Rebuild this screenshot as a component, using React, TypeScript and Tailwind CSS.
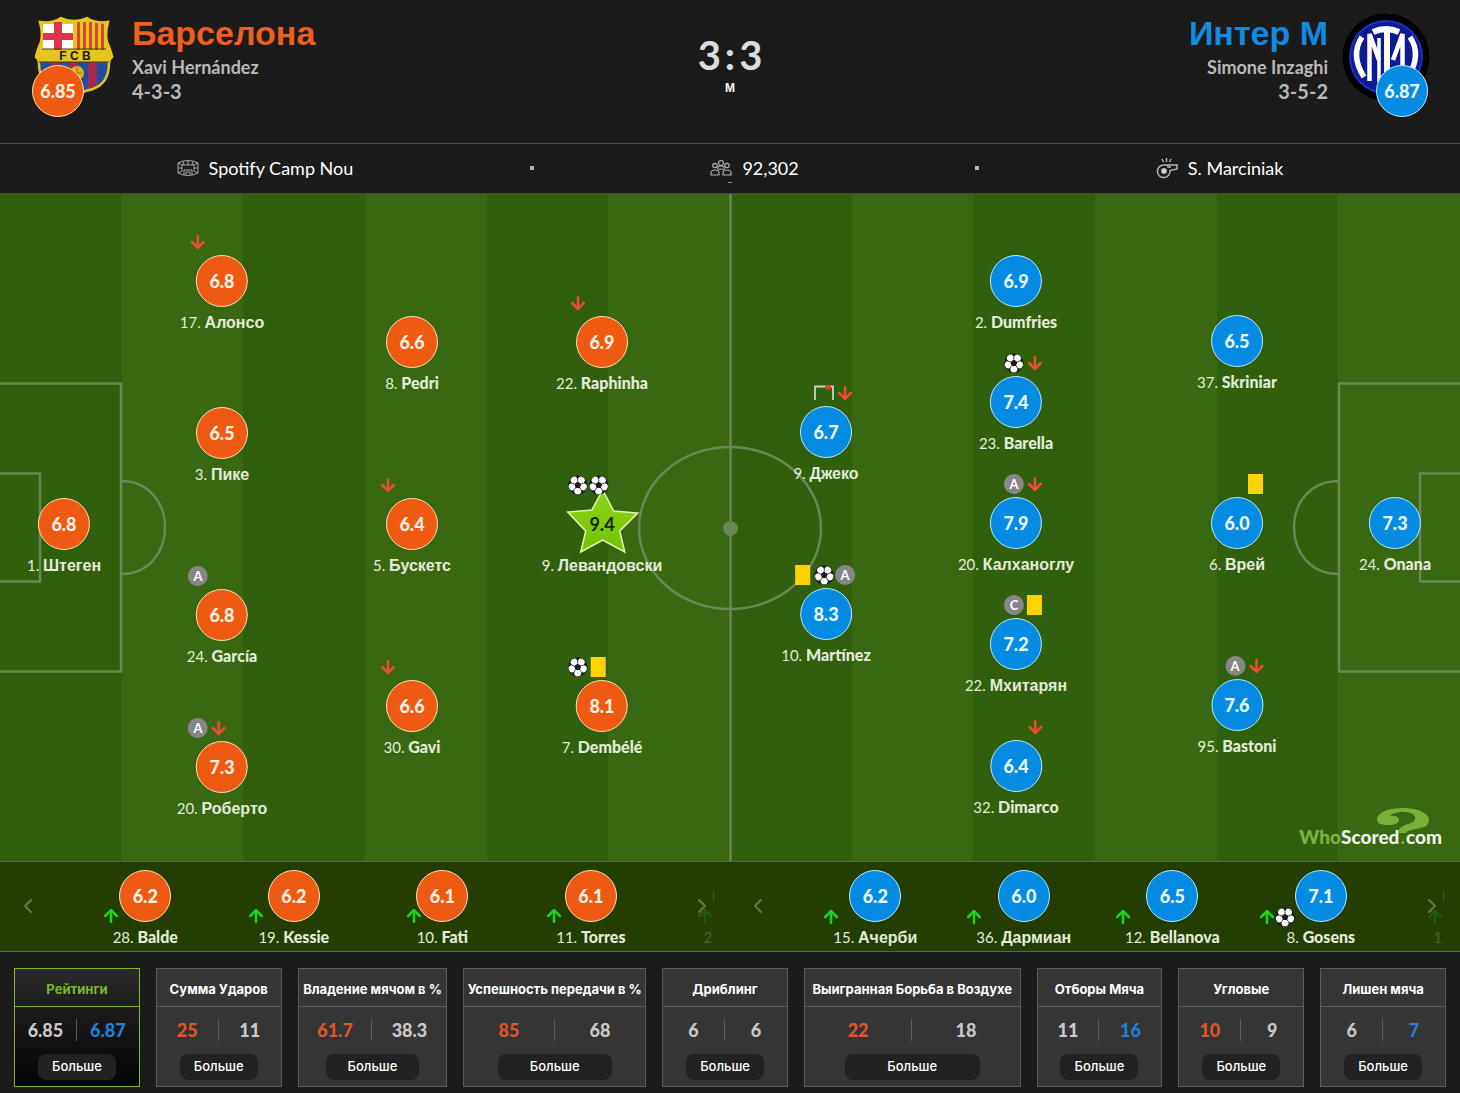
import { clsx } from "clsx";
import { ArrowDown, ArrowUp, ChevronLeft, ChevronRight } from "lucide-react";

type Team = "home" | "away";
type Event = "goal" | "assist" | "captain" | "yellow" | "off" | "on" | "woodwork";

interface PlayerData {
  number: number;
  name: string;
  rating: string;
  events?: Event[];
  star?: boolean;
}

interface PitchPlayer extends PlayerData {
  x: number;
  y: number;
}

// Pitch coordinates are in units of the 1460 x 667 pitch drawing
const PITCH_W = 1460;
const PITCH_H = 667;

const homePlayers: PitchPlayer[] = [
  { x: 64, y: 330, number: 1, name: "Штеген", rating: "6.8" },
  { x: 222, y: 87, number: 17, name: "Алонсо", rating: "6.8", events: ["off"] },
  { x: 222, y: 239, number: 3, name: "Пике", rating: "6.5" },
  { x: 222, y: 421, number: 24, name: "García", rating: "6.8", events: ["assist"] },
  { x: 222, y: 573, number: 20, name: "Роберто", rating: "7.3", events: ["assist", "off"] },
  { x: 412, y: 148, number: 8, name: "Pedri", rating: "6.6" },
  { x: 412, y: 330, number: 5, name: "Бускетс", rating: "6.4", events: ["off"] },
  { x: 412, y: 512, number: 30, name: "Gavi", rating: "6.6", events: ["off"] },
  { x: 602, y: 148, number: 22, name: "Raphinha", rating: "6.9", events: ["off"] },
  { x: 602, y: 330, number: 9, name: "Левандовски", rating: "9.4", events: ["goal", "goal"], star: true },
  { x: 602, y: 512, number: 7, name: "Dembélé", rating: "8.1", events: ["goal", "yellow"] },
];

const awayPlayers: PitchPlayer[] = [
  { x: 826, y: 238, number: 9, name: "Джеко", rating: "6.7", events: ["woodwork", "off"] },
  { x: 826, y: 420, number: 10, name: "Martínez", rating: "8.3", events: ["yellow", "goal", "assist"] },
  { x: 1016, y: 87, number: 2, name: "Dumfries", rating: "6.9" },
  { x: 1016, y: 208, number: 23, name: "Barella", rating: "7.4", events: ["goal", "off"] },
  { x: 1016, y: 329, number: 20, name: "Калханоглу", rating: "7.9", events: ["assist", "off"] },
  { x: 1016, y: 450, number: 22, name: "Мхитарян", rating: "7.2", events: ["captain", "yellow"] },
  { x: 1016, y: 572, number: 32, name: "Dimarco", rating: "6.4", events: ["off"] },
  { x: 1237, y: 147, number: 37, name: "Skriniar", rating: "6.5" },
  { x: 1237, y: 329, number: 6, name: "Врей", rating: "6.0", events: ["yellow"] },
  { x: 1237, y: 511, number: 95, name: "Bastoni", rating: "7.6", events: ["assist", "off"] },
  { x: 1395, y: 329, number: 24, name: "Onana", rating: "7.3" },
];

const homeSubs: PlayerData[] = [
  { number: 28, name: "Balde", rating: "6.2", events: ["on"] },
  { number: 19, name: "Kessie", rating: "6.2", events: ["on"] },
  { number: 10, name: "Fati", rating: "6.1", events: ["on"] },
  { number: 11, name: "Torres", rating: "6.1", events: ["on"] },
];

const awaySubs: PlayerData[] = [
  { number: 15, name: "Ачерби", rating: "6.2", events: ["on"] },
  { number: 36, name: "Дармиан", rating: "6.0", events: ["on"] },
  { number: 12, name: "Bellanova", rating: "6.5", events: ["on"] },
  { number: 8, name: "Gosens", rating: "7.1", events: ["on", "goal"] },
];

const stats = [
  { label: "Рейтинги", home: "6.85", away: "6.87", best: "away", active: true },
  { label: "Сумма Ударов", home: "25", away: "11", best: "home" },
  { label: "Владение мячом в %", home: "61.7", away: "38.3", best: "home" },
  { label: "Успешность передачи в %", home: "85", away: "68", best: "home" },
  { label: "Дриблинг", home: "6", away: "6" },
  { label: "Выигранная Борьба в Воздухе", home: "22", away: "18", best: "home" },
  { label: "Отборы Мяча", home: "11", away: "16", best: "away" },
  { label: "Угловые", home: "10", away: "9", best: "home" },
  { label: "Лишен мяча", home: "6", away: "7", best: "away" },
];

const isCyrillic = (text: string) => /[а-яё]/i.test(text);

function BallIcon() {
  return (
    <svg viewBox="0 0 20 20" className="h-5 w-5">
      <circle cx="10" cy="10" r="9.7" fill="#1c1c1c" />
      <g fill="#fff">
        {[0, 72, 144, 216, 288].map((angle) => (
          <ellipse key={angle} cx="10" cy="16.200" rx="3.500" ry="3.100" transform={`rotate(${angle} 10 10)`} />
        ))}
        <circle cx="10" cy="10" r="4.600" />
      </g>
      <path d="M10 6.400l3.500 2.500-1.300 4.100H7.800L6.500 8.900z" fill="#1c1c1c" />
      <path
        d="M10 6.400V4.500M13.500 8.900l1.800-.6M12.200 13l1.100 1.500M7.800 13l-1.100 1.500M6.500 8.900l-1.800-.6"
        stroke="#1c1c1c"
        strokeWidth="0.8"
      />
    </svg>
  );
}

function EventIcon({ type }: { type: Event }) {
  if (type === "goal") return <BallIcon />;
  if (type === "yellow") return <span className="ml-0.5 mr-[3px] h-5 w-[15px] bg-[#ffd200]" />;
  if (type === "off") return <ArrowDown className="h-5 w-5 text-[#ef4a33]" strokeWidth={3} />;
  if (type === "on") return <ArrowUp className="h-5 w-5 text-[#1ed41e]" strokeWidth={3} />;
  if (type === "woodwork") {
    return (
      <svg viewBox="0 0 20 20" className="h-5 w-5" fill="none">
        <path d="M1 17V3.500h18V17" stroke="#c9d6bd" strokeWidth="1.8" />
        <path d="M11 4h6M12.500 6.500l4-4.500M12.500 2l3.500 4.500" stroke="#ef3b35" strokeWidth="1.8" />
      </svg>
    );
  }
  return (
    <span className="flex h-5 w-5 items-center justify-center rounded-full bg-[#868686] font-['Lato',sans-serif] text-[13px] font-bold leading-5 text-white">
      {type === "assist" ? "A" : "C"}
    </span>
  );
}

function RatingCircle({ team, rating }: { team: Team; rating: string }) {
  return (
    <span
      className={clsx(
        "flex h-[52px] w-[52px] shrink-0 items-center justify-center rounded-full border text-lg font-black leading-6",
        team === "home"
          ? "border-[#ffdfb0] bg-[#ee5a12] text-[#fff0e4]"
          : "border-[#b5eaff] bg-[#068be2] text-[#e8f8ff]"
      )}
    >
      {rating}
    </span>
  );
}

function RatingStar({ rating }: { rating: string }) {
  return (
    <span className="relative flex h-[52px] w-[52px] items-center justify-center text-lg font-bold leading-6 text-[#14260a]">
      <svg viewBox="0 0 76 68" className="absolute -left-3 -top-3 h-[68px] w-[76px]">
        <defs>
          <linearGradient id="star" x1="0" y1="0" x2="0" y2="1">
            <stop offset="0" stopColor="#8ed41c" />
            <stop offset="1" stopColor="#72c404" />
          </linearGradient>
        </defs>
        <path
          d="M39 4l11 21 24 2-18 18 5 21-22-12-22 12 5-21L4 26l24-2z"
          fill="url(#star)"
          stroke="#e6f7b4"
          strokeWidth="1.500"
        />
      </svg>
      <span className="relative">{rating}</span>
    </span>
  );
}

function PlayerName({ number, name }: { number: number; name: string }) {
  return (
    <span className="mt-[5px] whitespace-nowrap text-[15px] leading-5 text-[#e4ecd9]">
      {number}.{" "}
      <b
        className={clsx(
          "text-base leading-5",
          isCyrillic(name) ? "font-['Liberation_Sans',sans-serif] font-bold" : "font-black"
        )}
      >
        {name}
      </b>
    </span>
  );
}

function Player({ player, team }: { player: PitchPlayer; team: Team }) {
  return (
    <li
      className="absolute flex -translate-x-1/2 -translate-y-[49px] flex-col items-center"
      style={{
        left: `${(player.x / PITCH_W) * 100}%`,
        top: `${(player.y / PITCH_H) * 100}%`,
      }}
    >
      <span
        className={clsx(
          "relative z-10 mb-[3px] flex h-5 w-16 items-center gap-px",
          team === "away" ? "mr-1.5 justify-end" : "mr-1"
        )}
      >
        {player.events?.map((type, i) => <EventIcon key={i} type={type} />)}
      </span>
      {player.star ? (
        <RatingStar rating={player.rating} />
      ) : (
        <RatingCircle team={team} rating={player.rating} />
      )}
      <PlayerName number={player.number} name={player.name} />
    </li>
  );
}

function PitchLines() {
  return (
    <svg
      viewBox="0 0 1460 667"
      preserveAspectRatio="none"
      className="absolute inset-0 h-full w-full"
      fill="none"
      stroke="#6a8757"
      strokeWidth="2.500"
    >
      <path d="M730.500 0v667" />
      <ellipse cx="730" cy="334" rx="91" ry="81" />
      <circle cx="730.500" cy="334.500" r="7.500" fill="#6a8757" stroke="none" />
      <path d="M0 189.500h121v288H0M0 279.500h40v108H0M121 287c27 0 44 21 44 46.500S148 380 121 380" />
      <path d="M1460 189.500h-121v288h121M1460 279.500h-40v108h40M1339 287c-28 0-45 21-45 46.500s17 46.500 45 46.500" />
    </svg>
  );
}

function WhoScoredLogo() {
  return (
    <a
      href="#"
      className="absolute bottom-3 right-[18px] flex text-[19px] font-black leading-6"
    >
      <span className="text-[#7cb342]">Who</span>
      <span className="text-[#f0f5ea]">Scored</span>
      <span className="mx-px text-[#7cb342]">.</span>
      <span className="text-[#f0f5ea]">com</span>
      <svg viewBox="0 0 54 28" className="absolute bottom-3.5 right-3 h-7 w-[54px]" fill="#76b13a">
        <path d="M1 13C1 5 13 1 27 1s26 5 26 12c0 6-6 8-13 9-6 1-9 2-10 4h-8c0-5 4-7 10-9 5-1 7-3 7-6 0-4-5-6-12-6-6 0-12 2-13 4 3-1 9 0 9 4 0 3-4 5-10 5-7 0-12-1-12-5z" />
      </svg>
    </a>
  );
}

function SubsRow({ subs, team, peek }: { subs: PlayerData[]; team: Team; peek: string }) {
  return (
    <div className="relative min-w-0 flex-1 pl-[71px] pr-4">
      <button
        aria-label="Назад"
        className="absolute left-4 top-8 text-[#5f7c49]"
      >
        <ChevronLeft className="h-6 w-6" />
      </button>
      <ul className="flex overflow-hidden">
        {subs.map((sub) => (
          <li key={sub.name} className="flex shrink-0 basis-[23.1%] justify-center">
            <div className="relative flex flex-col items-center pb-[3px] pt-2">
              <RatingCircle team={team} rating={sub.rating} />
              <span className="absolute bottom-6 right-full -mr-2 flex">
                {sub.events?.map((type, i) => (
                  <span key={i} className={clsx(i > 0 && "-ml-0.5")}>
                    <EventIcon type={type} />
                  </span>
                ))}
              </span>
              <PlayerName number={sub.number} name={sub.name} />
            </div>
          </li>
        ))}
        <li className="flex shrink-0 basis-[23.1%] justify-center opacity-20">
          <div className="relative flex w-[72px] flex-col items-center pb-[3px] pt-2">
            <RatingCircle team={team} rating="" />
            <span className="absolute bottom-6 right-full -mr-3 flex">
              <EventIcon type="on" />
            </span>
            <span className="mt-[5px] self-start text-[15px] leading-5 text-[#e4ecd9]">{peek}</span>
          </div>
        </li>
      </ul>
      <button
        aria-label="Вперед"
        className="absolute right-4 top-8 text-[#5f7c49]"
      >
        <ChevronRight className="h-6 w-6" />
      </button>
    </div>
  );
}

function BarcelonaCrest() {
  return (
    <svg viewBox="0 0 80 80" className="h-20 w-20">
      <defs>
        <clipPath id="crest">
          <path d="M6 6q11 2 21-4 6 3 13 3t13-3q10 6 21 4-3 11-1 20 4 9 5 15-3 2-3 6 0 20-16 26-12 3-19 6-7-3-19-6Q5 67 5 47q0-4-3-6 1-6 5-15 2-9-1-20z" />
        </clipPath>
      </defs>
      <g clipPath="url(#crest)">
        <path fill="#e5c51f" d="M0 0h80v80H0z" />
        <path fill="#fff" d="M9 8h30v25H9z" />
        <path fill="#e03248" d="M20 6h8v28h-8zM9 17h30v7H9z" />
        <path fill="#d8472b" d="M43 6h3v28h-3zM49 6h3v28h-3zM55 6h3v28h-3zM61 6h3v28h-3zM67 6h3v28h-3z" />
        <path fill="#1f4f9c" d="M6 46h68v34H6z" />
        <path fill="#a5284f" d="M17 46h9v34h-9zM35 46h9v34h-9zM54 46h9v34h-9z" />
        <circle cx="43" cy="57" r="7" fill="#dfb21c" />
        <path d="M38 57h10M43 51v12" stroke="#a07812" strokeWidth="1" />
      </g>
      <path
        d="M6 6q11 2 21-4 6 3 13 3t13-3q10 6 21 4-3 11-1 20 4 9 5 15-3 2-3 6 0 20-16 26-12 3-19 6-7-3-19-6Q5 67 5 47q0-4-3-6 1-6 5-15 2-9-1-20z"
        fill="none"
        stroke="#e5c51f"
        strokeWidth="2.500"
      />
      <path d="M8 33h64M5 46h70" stroke="#4a3d10" strokeWidth="1" />
      <text
        x="41"
        y="44"
        textAnchor="middle"
        fill="#171717"
        className="font-['Liberation_Sans',sans-serif] text-[12px] font-bold"
      >
        F C B
      </text>
    </svg>
  );
}

function InterCrest() {
  return (
    <svg viewBox="0 0 88 88" className="h-[88px] w-[88px]">
      <circle cx="44" cy="45" r="43.500" fill="#020203" />
      <circle cx="44" cy="45" r="37" fill="#1a30c8" />
      <circle cx="44" cy="45" r="35" fill="#0c1a94" />
      <g fill="none" stroke="#fff">
        <path d="M20 25q-12 18 2 40M68 25q12 18-2 40" strokeWidth="5.500" />
        <path d="M27.500 69V22l9.500 26M60.500 69V22L51 48" strokeWidth="4.500" strokeLinejoin="bevel" />
        <path d="M37 26v44" strokeWidth="3.500" />
        <path d="M31 20q13-6 26 0M45 18v54" strokeWidth="6" />
      </g>
    </svg>
  );
}

function StadiumIcon() {
  return (
    <svg viewBox="0 0 22 18" className="h-[18px] w-[22px]" fill="none" stroke="#a8a8a8" strokeWidth="1">
      <path d="M1 4q10-5 20 0v10q-10 5-20 0zM1 4q3 2 5 2h10q2 0 5-2M5 6v6M17 6v6M1 9h4M17 9h4M6 2.500L7 6M11 1.500V6M16 2.500L15 6M7 16v-5h8v5M9 16v-3h4v3M1 14l4-2M21 14l-4-2" />
    </svg>
  );
}

function CrowdIcon() {
  return (
    <svg viewBox="0 0 22 18" className="h-[18px] w-[22px]" fill="none" stroke="#b0b0b0" strokeWidth="1.2">
      <circle cx="11" cy="4" r="2.500" />
      <circle cx="5" cy="6.500" r="2.200" />
      <circle cx="17" cy="6.500" r="2.200" />
      <path d="M7.500 10q0-3 3.500-3t3.500 3M1 16v-2q0-3 4-3t4 3v2zM13 16v-2q0-3 4-3t4 3v2zM8 11q3-2 6 0" />
    </svg>
  );
}

function WhistleIcon() {
  return (
    <svg viewBox="0 0 22 22" className="h-[22px] w-[22px]" fill="none" stroke="#b5b5b5" strokeWidth="1.500">
      <path d="M8 8h13v4l-7 1.500a6.300 6.300 0 1 1-6-5.500zM12 8v2h3" />
      <circle cx="8" cy="14" r="2.200" fill="#e6e6e6" />
      <path d="M10.500 1v4M6 2l1.500 3M15 2l-1.500 3" />
    </svg>
  );
}

interface TeamHeaderProps {
  team: Team;
  name: string;
  coach: string;
  formation: string;
  rating: string;
}

function TeamHeader({ team, name, coach, formation, rating }: TeamHeaderProps) {
  const home = team === "home";
  return (
    <div className={clsx("flex gap-4", !home && "flex-row-reverse text-right")}>
      <div className="relative flex h-[105px] w-[84px] shrink-0 justify-center">
        <span className={clsx("absolute", home ? "top-1" : "top-0")}>
          {home ? <BarcelonaCrest /> : <InterCrest />}
        </span>
        <span className={clsx("absolute bottom-0", home ? "left-0" : "right-0")}>
          <RatingCircle team={team} rating={rating} />
        </span>
      </div>
      <div className="text-lg font-bold leading-6 text-[#b9b9b9]">
        <h2
          className={clsx(
            "font-['Liberation_Sans',sans-serif] text-[34px] leading-[43px]",
            home ? "text-[#ee5f20]" : "text-[#138be0]"
          )}
        >
          {name}
        </h2>
        <p>{coach}</p>
        <p className="text-xl leading-6">{formation}</p>
      </div>
    </div>
  );
}

function StatCard({ stat }: { stat: (typeof stats)[number] }) {
  return (
    <section
      className={clsx(
        "flex flex-col items-center border",
        stat.active
          ? "border-[#7cb82f] bg-linear-to-b from-[#2b2b2b] to-[#050505]"
          : "border-[#5c5c5c] bg-[#353535]"
      )}
    >
      <h3
        className={clsx(
          "flex h-[38px] w-full items-center justify-center whitespace-nowrap border-b pt-1 font-['Inter',sans-serif] text-[13px] font-bold",
          stat.active ? "border-[#7cb82f] text-[#7ab82a]" : "border-[#5c5c5c] text-white"
        )}
      >
        {stat.label}
      </h3>
      <div className="mt-3 grid w-full grid-cols-2 text-center text-lg font-black leading-[22px]">
        <span className={clsx("border-r border-[#5c5c5c]", stat.best === "home" ? "text-[#df5528]" : "text-[#c9c9c9]")}>
          {stat.home}
        </span>
        <span className={stat.best === "away" ? "text-[#2180d8]" : "text-[#c9c9c9]"}>
          {stat.away}
        </span>
      </div>
      <button className="mb-1.5 mt-[13px] h-[26px] w-[63%] rounded-lg bg-[#222] font-['Inter',sans-serif] text-[13px] font-medium text-white">
        Больше
      </button>
    </section>
  );
}

export default function App() {
  return (
    <main className="min-h-screen bg-[#1b1b1b] font-['Lato',sans-serif] text-white">
      <header className="grid h-[143px] grid-cols-[1fr_auto_1fr] px-8 pt-3">
        <TeamHeader team="home" name="Барселона" coach="Xavi Hernández" formation="4-3-3" rating="6.85" />
        <div className="pt-[18px] text-center font-bold">
          <p className="flex justify-center gap-1 text-[40px] leading-[50px] text-[#dcdcdc]">
            <span>3</span>
            <span>:</span>
            <span>3</span>
          </p>
          <p className="font-['Liberation_Sans',sans-serif] text-xs leading-4">М</p>
        </div>
        <TeamHeader team="away" name="Интер М" coach="Simone Inzaghi" formation="3-5-2" rating="6.87" />
      </header>

      <div className="relative flex h-[51px] items-center justify-evenly border-y border-[#4a4a4a] pb-0.5 text-lg text-white">
        <span className="flex items-center gap-2.5">
          <StadiumIcon />
          Spotify Camp Nou
        </span>
        <span className="h-1 w-1 bg-[#b5b5b5]" />
        <span className="flex items-center gap-2.5">
          <CrowdIcon />
          92,302
        </span>
        <span className="h-1 w-1 bg-[#b5b5b5]" />
        <span className="flex items-center gap-2.5">
          <WhistleIcon />
          S. Marciniak
        </span>
        <span className="absolute bottom-2.5 left-1/2 h-px w-1 -translate-x-1/2 bg-[#8a8a8a]" />
      </div>

      <div className="relative aspect-[1460/667] w-full overflow-hidden">
        <div className="grid h-full grid-cols-12">
          {Array.from({ length: 12 }, (_, i) => (
            <div key={i} className={i % 2 ? "bg-[#386812]" : "bg-[#30600e]"} />
          ))}
        </div>
        <PitchLines />
        <ul>
          {homePlayers.map((p) => <Player key={p.name} player={p} team="home" />)}
        </ul>
        <ul>
          {awayPlayers.map((p) => <Player key={p.name} player={p} team="away" />)}
        </ul>
        <WhoScoredLogo />
      </div>

      <div className="flex border-y border-[#556b42] bg-[#243d02]">
        <SubsRow subs={homeSubs} team="home" peek="2" />
        <SubsRow subs={awaySubs} team="away" peek="1" />
      </div>

      <div className="grid grid-cols-[126fr_126fr_150fr_183fr_126fr_217fr_126fr_126fr_126fr] gap-4 px-3.5 pb-1.5 pt-4">
        {stats.map((stat) => <StatCard key={stat.label} stat={stat} />)}
      </div>
    </main>
  );
}
